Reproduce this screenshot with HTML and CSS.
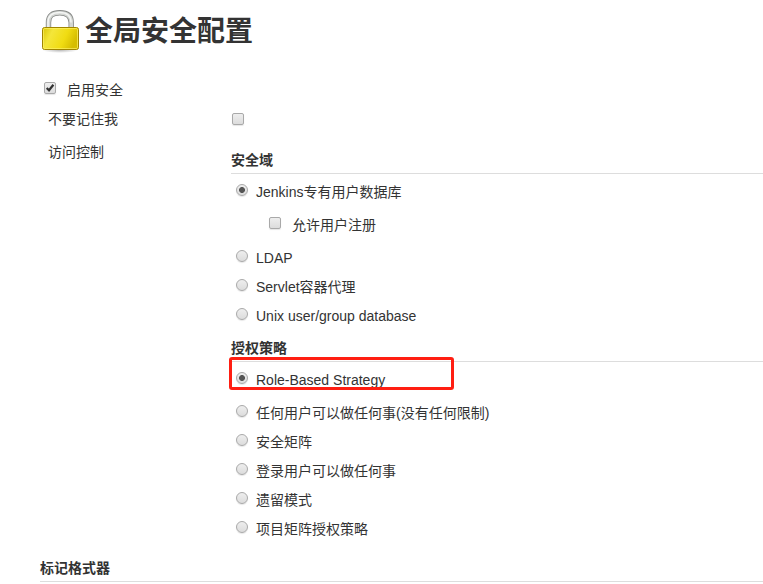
FILE: index.html
```
<!DOCTYPE html>
<html lang="zh-CN">
<head>
<meta charset="utf-8">
<title>全局安全配置</title>
<link rel="stylesheet" href="styles.css">
</head>
<body>
<main class="page">
  <header class="header">
    <svg class="lock" width="40" height="44" viewBox="0 0 40 44" aria-hidden="true">
      <defs>
        <linearGradient id="gold" x1="0" y1="0" x2="1" y2="0.3">
          <stop offset="0" stop-color="#d8c408"/>
          <stop offset="0.3" stop-color="#f4e63a"/>
          <stop offset="0.7" stop-color="#f0dc12"/>
          <stop offset="1" stop-color="#d6bd00"/>
        </linearGradient>
        <radialGradient id="shade">
          <stop offset="0" stop-color="#888" stop-opacity="0.6"/>
          <stop offset="1" stop-color="#888" stop-opacity="0"/>
        </radialGradient>
      </defs>
      <ellipse cx="20" cy="41" rx="18" ry="3" fill="url(#shade)"/>
      <path d="M8.500 20V13.500C8.500 6.500 12.500 3.800 19.800 3.800S31.200 6.500 31.200 13.500V20" fill="none" stroke="#868886" stroke-width="5.400"/>
      <path d="M8.500 20V13.500C8.500 6.500 12.500 3.800 19.800 3.800S31.200 6.500 31.200 13.500V20" fill="none" stroke="#d3d6d2" stroke-width="3.800"/>
      <path d="M8 19V13.500C8 6.200 12.500 3.400 19.800 3.400S31 6.500 31 13.500" fill="none" stroke="#f4f5f4" stroke-width="1.500"/>
      <rect x="2.500" y="18.500" width="36" height="22" rx="2" fill="url(#gold)" stroke="#a08500"/>
      <rect x="3.500" y="19.500" width="34" height="20" rx="1.200" fill="none" stroke="#fff36b" stroke-opacity="0.65"/>
    </svg>
    <h1 class="title">全局安全配置</h1>
  </header>

  <div class="option enable"><i class="check checked"><svg viewBox="0 0 12 12"><path d="M2.700 6 5 8.300 9.400 2.700"/></svg></i><span>启用安全</span></div>

  <div class="setting remember">
    <div class="name">不要记住我</div>
    <div class="value"><i class="check"></i></div>
  </div>

  <div class="setting access">
    <div class="name">访问控制</div>
    <div class="value">
      <h2 class="section">安全域</h2>
      <div class="options">
        <div class="option"><i class="radio on"></i><span>Jenkins专有用户数据库</span></div>
        <div class="option nested"><i class="check"></i><span>允许用户注册</span></div>
        <div class="option"><i class="radio"></i><span>LDAP</span></div>
        <div class="option"><i class="radio"></i><span>Servlet容器代理</span></div>
        <div class="option"><i class="radio"></i><span>Unix user/group database</span></div>
      </div>
      <h2 class="section">授权策略</h2>
      <div class="options">
        <div class="option role"><i class="radio on"></i><span>Role-Based Strategy</span><b class="highlight"></b></div>
        <div class="option"><i class="radio"></i><span>任何用户可以做任何事(没有任何限制)</span></div>
        <div class="option"><i class="radio"></i><span>安全矩阵</span></div>
        <div class="option"><i class="radio"></i><span>登录用户可以做任何事</span></div>
        <div class="option"><i class="radio"></i><span>遗留模式</span></div>
        <div class="option"><i class="radio"></i><span>项目矩阵授权策略</span></div>
      </div>
    </div>
  </div>

  <h2 class="section formatter">标记格式器</h2>
</main>
</body>
</html>
```
FILE: styles.css
```
* { box-sizing: border-box; }

body {
  margin: 0;
  background: #fff;
  color: #333;
  font: 14px/20px "Liberation Sans", "Noto Sans CJK SC", sans-serif;
  overflow: hidden;
}

.page { padding-left: 40px; }

.header {
  display: flex;
  height: 76px;
  padding-top: 9px;
}

.lock { flex: none; }

.title {
  margin: 2px 0 0 5px;
  font-size: 28px;
  line-height: 42px;
  font-weight: 700;
}

.option {
  display: flex;
  align-items: center;
  height: 28px;
  margin-bottom: 1px;
  padding-left: 5px;
  white-space: nowrap;
}

.option .radio,
.option .check {
  margin: 0 8px 4px 0;
}

.enable { padding-left: 4px; }
.option.enable .check { margin-right: 11px; }

.setting {
  display: grid;
  grid-template-columns: 191px 1fr;
}

.name { padding-left: 8px; }

.remember { height: 29px; align-items: center; padding-bottom: 2px; }
.remember .value { padding-left: 1px; }

.access .name { padding-top: 8px; }
.access .value { padding-top: 13px; }

.section {
  height: 27px;
  margin: 0 0 4px;
  border-bottom: 1px solid #ddd;
  font-size: 14px;
  line-height: 26px;
  font-weight: 700;
}

.options { margin-bottom: 5px; }
.option.nested { margin: 5px 0; padding-left: 38px; }
.option.nested .check { margin-right: 11px; }

.role { position: relative; }
.option.role { margin-bottom: 5px; }

.highlight {
  position: absolute;
  left: -2px;
  top: -9px;
  width: 225px;
  height: 33px;
  border: 3px solid #ff1e12;
  border-radius: 3px;
}

.formatter { margin: 7px 0 0; }

.check,
.radio {
  display: block;
  flex: none;
  width: 12px;
  height: 12px;
  border: 1px solid #a9a9a9;
  background: linear-gradient(#eee, #dcdcdc);
  box-shadow: 0 1px 1px rgba(0, 0, 0, 0.1);
}

.check { border-radius: 2px; }
.radio { border-radius: 50%; }

.radio.on {
  background: radial-gradient(circle, #555 0 2.6px, transparent 3.300px), linear-gradient(#eee, #dcdcdc);
}

.check svg {
  display: block;
  width: 12px;
  height: 12px;
  margin: -1px;
  fill: none;
  stroke: #333;
  stroke-width: 2.200;
}
```
